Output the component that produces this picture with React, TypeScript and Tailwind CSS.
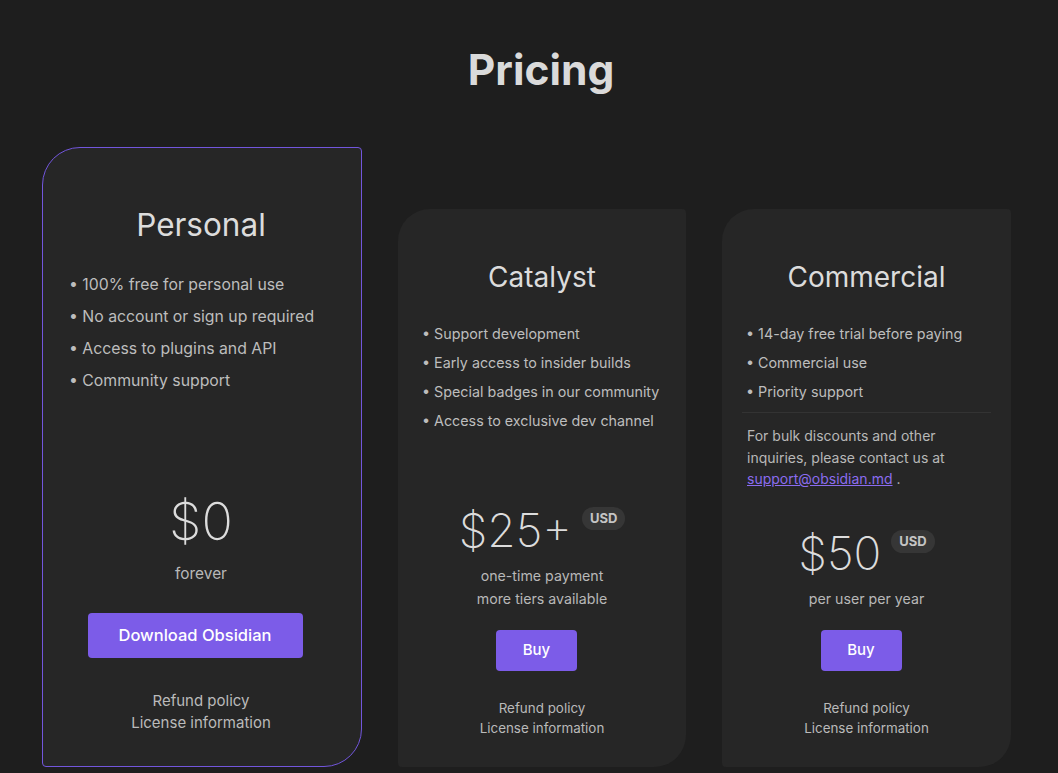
import React from 'react';

type Plan = {
  name: string;
  bullets: string[];
  price: string;
  usd: boolean;
  sub: string[];
  cta: string;
  contact?: boolean;
};

const catalyst: Plan = {
  name: 'Catalyst',
  bullets: [
    'Support development',
    'Early access to insider builds',
    'Special badges in our community',
    'Access to exclusive dev channel',
  ],
  price: '$25+',
  usd: true,
  sub: ['one-time payment', 'more tiers available'],
  cta: 'Buy',
};

const commercial: Plan = {
  name: 'Commercial',
  bullets: ['14-day free trial before paying', 'Commercial use', 'Priority support'],
  price: '$50',
  usd: true,
  sub: ['per user per year'],
  cta: 'Buy',
  contact: true,
};

function PersonalCard() {
  return (
    <div className="flex h-[620px] w-[320px] shrink-0 flex-col justify-between rounded-[4px] rounded-tl-[38px] rounded-br-[38px] border border-[#7256dc] bg-[#262626] pt-[58px] pr-7 pb-[32px] pl-[26px]">
      <div>
        <h2 className="text-center text-[31.5px] leading-[37px] font-normal text-[#dcdcdc]">Personal</h2>
        <ul className="mt-[26px] text-[15.8px] leading-[32px] text-[#bdbdbd]">
          <li>• 100% free for personal use</li>
          <li>• No account or sign up required</li>
          <li>• Access to plugins and API</li>
          <li>• Community support</li>
        </ul>
      </div>
      <div className="flex flex-col items-center text-center">
        <div className="text-[52px] leading-[62px] font-extralight text-[#dcdcdc]">$0</div>
        <div className="mt-[8px] text-[15.4px] leading-[25px] text-[#b8b8b8]">forever</div>
        <button
          type="button"
          className="mt-[27px] mr-[12px] h-[45px] w-[215px] rounded-[4px] bg-[#7c5ce8] text-[16.5px] font-medium text-white"
        >
          Download Obsidian
        </button>
        <div className="mt-[32px] text-[15px] leading-[22px] text-[#bababa]">
          <div>Refund policy</div>
          <div>License information</div>
        </div>
      </div>
    </div>
  );
}

function PlanCard({ plan, width }: { plan: Plan; width: string }) {
  return (
    <div
      className={`flex h-[558px] ${width} shrink-0 flex-col justify-between rounded-[4px] rounded-tl-[32px] rounded-br-[32px] bg-[#262626] px-5 pt-[51px] pb-[29px]`}
    >
      <div>
        <h2 className="text-center text-[28px] leading-[34px] font-normal text-[#dcdcdc]">{plan.name}</h2>
        <ul className="mt-[25px] pl-[4px] text-[14.3px] leading-[29px] text-[#bdbdbd]">
          {plan.bullets.map((b) => (
            <li key={b}>• {b}</li>
          ))}
        </ul>
        {plan.contact && (
          <>
            <div className="mt-[6px] border-t border-[#333333]" />
            <p className="mt-3 px-[5px] text-[14px] leading-[21.5px] text-[#b8b8b8]">
              For bulk discounts and other inquiries, please contact us at{' '}
              <a href="#" className="text-[#8b6cef] underline">
                support@obsidian.md
              </a>{' '}
              .
            </p>
          </>
        )}
      </div>
      <div className="flex flex-col items-center text-center">
        <div className="flex items-start justify-center">
          <span className="text-[46px] leading-[56px] font-extralight text-[#dcdcdc]">{plan.price}</span>
          {plan.usd && (
            <span className="mt-[5px] ml-[10px] h-[23px] rounded-full bg-[#363636] px-2 text-[13px] leading-[23px] font-bold text-[#c4c4c4]">
              USD
            </span>
          )}
        </div>
        <div className="mt-[6px] text-[14.2px] leading-[23px] text-[#b8b8b8]">
          {plan.sub.map((s) => (
            <div key={s}>{s}</div>
          ))}
        </div>
        <button
          type="button"
          className="mt-[20px] mr-[11px] h-[41px] w-[81px] rounded-[4px] bg-[#7c5ce8] text-[15px] font-medium text-white"
        >
          {plan.cta}
        </button>
        <div className="mt-[27px] text-[13.4px] leading-[20px] text-[#bababa]">
          <div>Refund policy</div>
          <div>License information</div>
        </div>
      </div>
    </div>
  );
}

export default function App() {
  return (
    <div
      className="min-h-[773px] bg-[#1e1e1e] pt-[45px] pb-[6px]"
      style={{ fontFamily: 'Inter, "Noto Sans", sans-serif' }}
    >
      <h1 className="pl-[24px] text-center text-[42.5px] leading-[50px] font-bold text-[#dadada]">Pricing</h1>
      <div className="mt-[52px] flex items-end gap-[36px] pl-[42px]">
        <PersonalCard />
        <PlanCard plan={catalyst} width="w-[288px]" />
        <PlanCard plan={commercial} width="w-[289px]" />
      </div>
    </div>
  );
}
